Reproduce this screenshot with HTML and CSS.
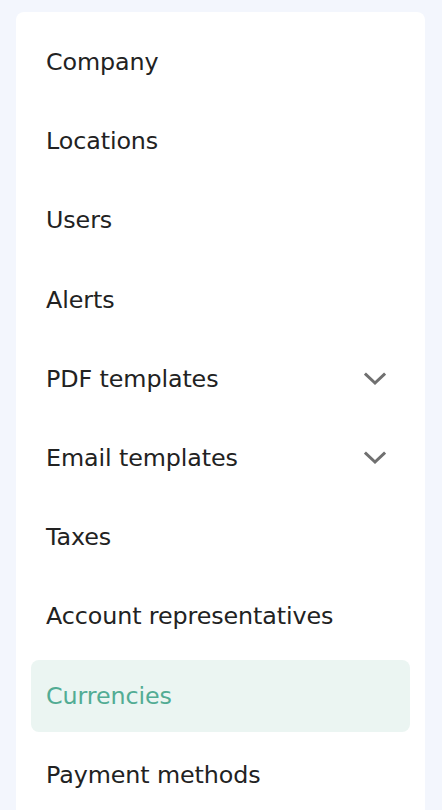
FILE: index.html
```html
<!DOCTYPE html>
<html lang="en">
<head>
<meta charset="utf-8">
<title>Settings menu</title>
<link rel="stylesheet" href="styles.css">
</head>
<body>
<nav class="card">
  <ul class="menu">
    <li class="item">Company</li>
    <li class="item">Locations</li>
    <li class="item">Users</li>
    <li class="item">Alerts</li>
    <li class="item has-sub">PDF templates
      <svg class="chev" viewBox="0 0 22 14" aria-hidden="true"><path d="M2 2.5 L11 11 L20 2.5"/></svg>
    </li>
    <li class="item has-sub">Email templates
      <svg class="chev" viewBox="0 0 22 14" aria-hidden="true"><path d="M2 2.5 L11 11 L20 2.5"/></svg>
    </li>
    <li class="item">Taxes</li>
    <li class="item">Account representatives</li>
    <li class="item active">Currencies</li>
    <li class="item">Payment methods</li>
  </ul>
</nav>
</body>
</html>
```
FILE: styles.css
```css
html, body {
  margin: 0;
  padding: 0;
  background: #f3f6fd;
  overflow: hidden;
}
body {
  padding: 12px 17px 0 16px;
  height: 810px;
  box-sizing: border-box;
  font-family: "DejaVu Sans", "Open Sans", sans-serif;
}
.card {
  background: #ffffff;
  border-radius: 8px 8px 0 0;
  padding: 14px 15px 0 15px;
  height: 100%;
  box-sizing: border-box;
}
.menu {
  list-style: none;
  margin: 0;
  padding: 0;
  display: flex;
  flex-direction: column;
  gap: 7px;
}
.item {
  flex: 0 0 72.2px;
  display: flex;
  align-items: center;
  justify-content: space-between;
  padding: 0 24px 0 15px;
  border-radius: 8px;
  font-size: 23.8px;
  color: #222222;
  letter-spacing: -0.1px;
}
.item.active {
  background: #ebf5f2;
  color: #52ac94;
}
.chev {
  width: 22px;
  height: 14px;
  fill: none;
  stroke: #707070;
  stroke-width: 3;
  stroke-linecap: square;
}
```
